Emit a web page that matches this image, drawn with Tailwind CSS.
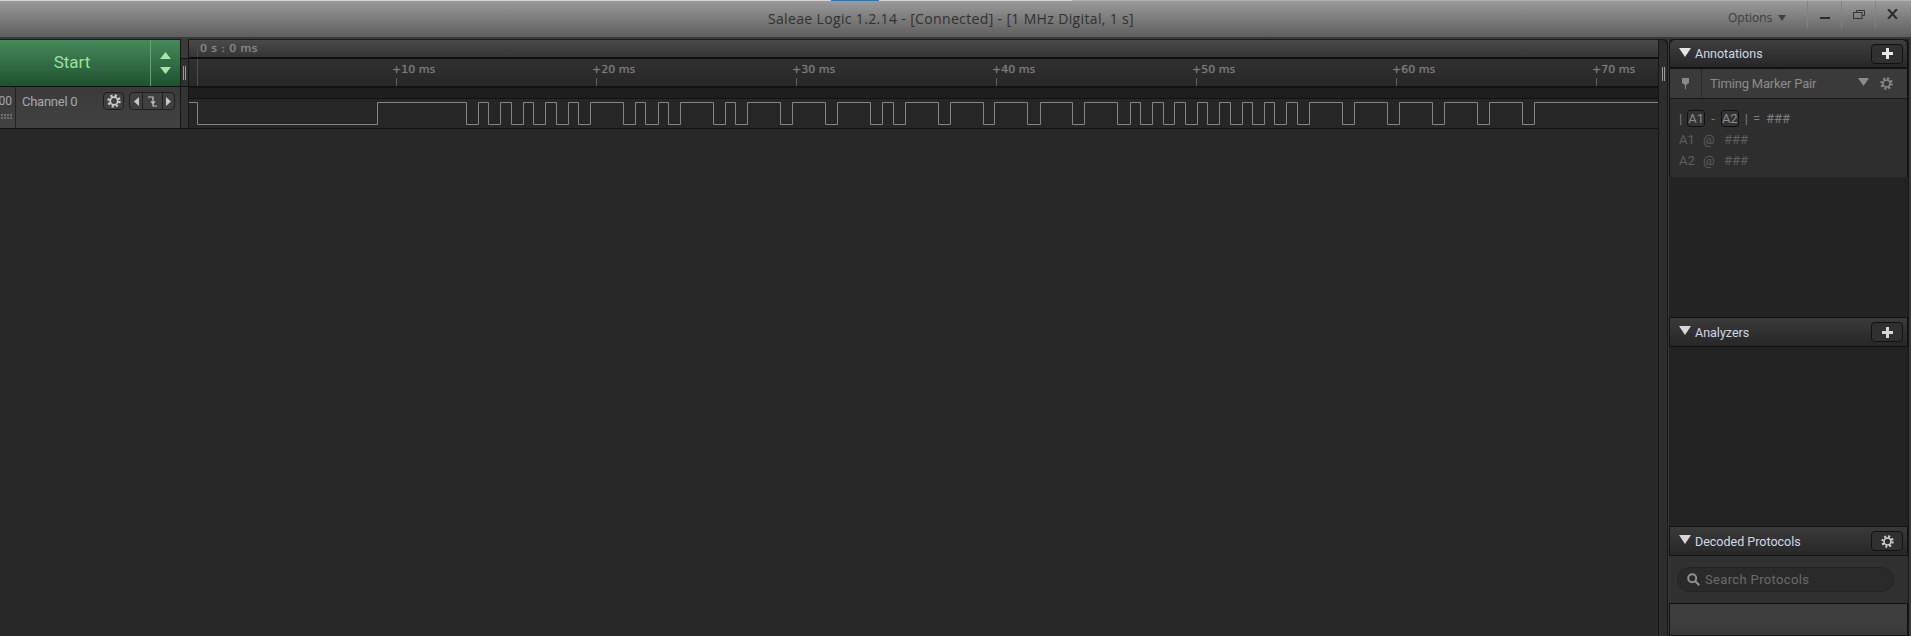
<!DOCTYPE html>
<html>
<head>
<meta charset="utf-8">
<script src="https://cdn.jsdelivr.net/npm/@tailwindcss/browser@4"></script>
</head>
<body class="m-0 bg-[#282828]">
<div class="w-[1911px] h-[636px] overflow-hidden flex flex-col font-['Roboto',sans-serif] bg-[#282828]">
  <!-- title bar -->
  <div class="h-[39px] shrink-0 flex flex-col bg-gradient-to-b from-[#9c9c9c] to-[#5e5e5e] border-b-2 border-[#3a3a3a]">
    <div class="h-px shrink-0 flex">
      <div class="w-[831px] bg-[#d4d4d4]"></div>
      <div class="w-[48px] bg-[#1379e0]"></div>
      <div class="w-[193px] bg-[#d4d4d4]"></div>
      <div class="flex-1 bg-[#b0b0b0]"></div>
    </div>
    <div class="flex-1 flex relative">
      <div class="flex-1 flex justify-center pt-[8px] pr-[9px] font-['Open_Sans',sans-serif] text-[14px] leading-[19px] tracking-[0.35px] text-[#303030] whitespace-nowrap">Saleae Logic 1.2.14 - [Connected] - [1 MHz Digital, 1 s]</div>
      <div class="absolute left-[1728px] top-[9px] flex items-center gap-[6px] font-['Open_Sans',sans-serif] text-[12px] leading-[16px] text-[#3c3c3c]">
        Options
        <svg width="8" height="6" viewBox="0 0 8 6"><path d="M0 0H8L4 6Z" fill="#404040"/></svg>
      </div>
      <div class="absolute left-[1807px] top-0 h-[27px] flex">
        <div class="w-[34px] border-l border-[#828282] flex items-center justify-center pt-[6px]"><div class="w-[10px] h-[2px] bg-[#2c2c2c]"></div></div>
        <div class="w-[34px] border-l border-[#828282] flex items-start justify-center pt-[9px]">
          <svg width="12" height="9" viewBox="0 0 12 9" fill="none" stroke="#333"><path d="M3.5 2V.5H11.5V5.5H9"/><rect x=".5" y="2.5" width="8.5" height="6"/></svg>
        </div>
        <div class="w-[34px] border-l border-[#828282] flex items-start justify-center pt-[8px]">
          <svg width="11" height="10" viewBox="0 0 11 10" fill="none" stroke="#2c2c2c" stroke-width="2"><path d="M1 0 10 10M10 0 1 10"/></svg>
        </div>
      </div>
    </div>
  </div>

  <!-- main -->
  <div class="flex-1 flex min-h-0">
    <!-- capture area -->
    <div class="w-[1658px] shrink-0 flex flex-col">
      <!-- header row -->
      <div class="h-[48px] shrink-0 flex border-b border-[#111]">
        <div class="w-[180px] shrink-0 flex border-t border-[#1c1c1c] bg-gradient-to-b from-[#468a5a] to-[#1f5230]">
          <div class="w-[150px] flex items-center justify-center pr-[6px] text-[17px] text-[#9fe09f]">Start</div>
          <div class="w-[30px] border-l border-[#65a277] flex flex-col items-center justify-center gap-[8px]">
            <svg width="11" height="7" viewBox="0 0 11 7"><path d="M5.5 0 11 7H0Z" fill="#a8e6a8"/></svg>
            <svg width="11" height="7" viewBox="0 0 11 7"><path d="M0 0H11L5.5 7Z" fill="#a8e6a8"/></svg>
          </div>
        </div>
        <div class="w-[9px] shrink-0 flex flex-col border-x border-[#161616]">
          <div class="h-[20px] bg-[#3a3a3a] border-b border-[#111]"></div>
          <div class="flex-1 bg-[#303030] flex items-center justify-center pt-[1px]">
            <div class="w-[3px] h-[14px] border-x border-[#9a9a9a]"></div>
          </div>
        </div>
        <div class="flex-1 flex flex-col">
          <div class="h-[20px] shrink-0 relative border-t border-[#1c1c1c] border-b-2 border-b-[#0f0f0f] bg-gradient-to-b from-[#4a4a4a] to-[#353535] flex items-center pl-[11px] pt-[2px] font-['DejaVu_Sans',sans-serif] text-[11px] tracking-[0.4px] [text-shadow:0_0_1px_#777] text-[#8a8a8a] whitespace-nowrap">
            0 s : 0 ms
            <div class="absolute left-[8px] bottom-0 h-[8px] w-px bg-[#505050]"></div>
          </div>
          <div class="flex-1 bg-gradient-to-b from-[#303030] to-[#272727] flex font-['DejaVu_Sans',sans-serif] text-[11px] leading-[14px] [text-shadow:0_0_1px_#666] text-[#7c7c7c] whitespace-nowrap">
            <div class="w-[9px] shrink-0 border-r border-[#505050]"></div>
            <div class="w-[198px] shrink-0"></div>
            <div class="w-[200px] shrink-0 flex flex-col justify-between">
              <div class="-ml-[4px] mt-[4px]">+10 ms</div>
              <div class="w-px h-[8px] bg-[#5e5e5e]"></div>
            </div>
            <div class="w-[200px] shrink-0 flex flex-col justify-between">
              <div class="-ml-[4px] mt-[4px]">+20 ms</div>
              <div class="w-px h-[8px] bg-[#5e5e5e]"></div>
            </div>
            <div class="w-[200px] shrink-0 flex flex-col justify-between">
              <div class="-ml-[4px] mt-[4px]">+30 ms</div>
              <div class="w-px h-[8px] bg-[#5e5e5e]"></div>
            </div>
            <div class="w-[200px] shrink-0 flex flex-col justify-between">
              <div class="-ml-[4px] mt-[4px]">+40 ms</div>
              <div class="w-px h-[8px] bg-[#5e5e5e]"></div>
            </div>
            <div class="w-[200px] shrink-0 flex flex-col justify-between">
              <div class="-ml-[4px] mt-[4px]">+50 ms</div>
              <div class="w-px h-[8px] bg-[#5e5e5e]"></div>
            </div>
            <div class="w-[200px] shrink-0 flex flex-col justify-between">
              <div class="-ml-[4px] mt-[4px]">+60 ms</div>
              <div class="w-px h-[8px] bg-[#5e5e5e]"></div>
            </div>
            <div class="w-[60px] shrink-0 flex flex-col justify-between">
              <div class="-ml-[4px] mt-[4px]">+70 ms</div>
              <div class="w-px h-[8px] bg-[#5e5e5e]"></div>
            </div>
          </div>
        </div>
      </div>
      <!-- channel row -->
      <div class="h-[42px] shrink-0 flex border-b border-[#111]">
        <div class="w-[180px] shrink-0 flex bg-gradient-to-b from-[#3a3a3a] to-[#424242]">
          <div class="w-[16px] shrink-0 border-r border-[#222] flex flex-col items-end pr-[3px] pt-[6px]">
            <div class="text-[12px] leading-[16px] text-[#a8a8a8]">00</div>
            <div class="mt-[5px] w-[11px] flex flex-col gap-[1px]">
              <div class="h-[2px] bg-[repeating-linear-gradient(90deg,#6e6e6e_0_2px,transparent_2px_3px)]"></div>
              <div class="h-[2px] bg-[repeating-linear-gradient(90deg,#6e6e6e_0_2px,transparent_2px_3px)]"></div>
            </div>
          </div>
          <div class="flex-1 flex items-start pl-[6px] pt-[7px]">
            <div class="w-[81px] text-[13px] leading-[16px] tracking-[-0.25px] text-[#a8a8a8] whitespace-nowrap">Channel 0</div>
            <div class="-mt-[2px] w-[21px] h-[18px] rounded-[4px] border border-[#1f1f1f] bg-[#404040] flex items-center justify-center">
              <svg width="14" height="14" viewBox="0 0 24 24" fill="none" stroke="#cccccc"><circle cx="12" cy="12" r="6.500" stroke-width="3"/><circle cx="12" cy="12" r="9.500" stroke-width="4" stroke-dasharray="3.730 3.730"/></svg>
            </div>
            <div class="-mt-[2px] ml-[5px] w-[46px] h-[18px] rounded-[4px] border border-[#1f1f1f] bg-[#404040] flex">
              <div class="w-[13px] border-r border-[#1f1f1f] flex items-center justify-center"><svg width="5" height="9" viewBox="0 0 5 9"><path d="M5 0V9L0 4.500Z" fill="#c8c8c8"/></svg></div>
              <div class="w-[20px] border-r border-[#1f1f1f] flex items-center justify-center"><svg width="9" height="11" viewBox="0 0 9 11" fill="none" stroke="#c8c8c8" stroke-width="1.200"><path d="M0 1H5V10H9M3 5.500 5 7.500 7 5.500"/></svg></div>
              <div class="flex-1 flex items-center justify-center"><svg width="5" height="9" viewBox="0 0 5 9"><path d="M0 0V9L5 4.500Z" fill="#c8c8c8"/></svg></div>
            </div>
          </div>
        </div>
        <div class="w-[9px] shrink-0 border-x border-[#161616] bg-[#333]"></div>
        <div class="flex-1 flex flex-col bg-[#262626]">
          <div class="h-[12px] shrink-0 bg-[#1e1e1e] border-y border-[#111]"></div>
          <svg class="flex-1 block" width="1469" height="29" viewBox="189 99 1469 29" fill="none" stroke="#858585" stroke-width="1"><path d="M189 102.500H197.500V124.500H377.500V102.500H466.500V124.500H478.500V102.500H488.500V124.500H500.500V102.500H511.500V124.500H523.500V102.500H533.500V124.500H545.500V102.500H556.500V124.500H568.500V102.500H578.500V124.500H590.500V102.500H623.500V124.500H635.500V102.500H645.500V124.500H658.500V102.500H668.500V124.500H680.500V102.500H713.500V124.500H725.500V102.500H735.500V124.500H747.500V102.500H780.500V124.500H792.500V102.500H825.500V124.500H837.500V102.500H870.500V124.500H882.500V102.500H893.500V124.500H905.500V102.500H938.500V124.500H950.500V102.500H983.500V124.500H994.500V102.500H1027.500V124.500H1040.500V102.500H1072.500V124.500H1084.500V102.500H1117.500V124.500H1130.500V102.500H1140.500V124.500H1152.500V102.500H1163.500V124.500H1174.500V102.500H1185.500V124.500H1197.500V102.500H1207.500V124.500H1219.500V102.500H1230.500V124.500H1242.500V102.500H1252.500V124.500H1264.500V102.500H1274.500V124.500H1286.500V102.500H1297.500V124.500H1309.500V102.500H1342.500V124.500H1354.500V102.500H1387.500V124.500H1399.500V102.500H1432.500V124.500H1444.500V102.500H1477.500V124.500H1489.500V102.500H1522.500V124.500H1534.500V102.500H1658"/></svg>
        </div>
      </div>
      <div class="flex-1 bg-[#282828]"></div>
    </div>
    <!-- right splitter -->
    <div class="w-[10px] shrink-0 flex flex-col border-x border-[#161616] rounded-tr-[6px] border-t bg-[#2d2d2d]">
      <div class="h-[20px]"></div>
      <div class="h-[27px] flex items-center justify-center"><div class="w-[3px] h-[14px] border-x border-[#9a9a9a]"></div></div>
    </div>
    <div class="w-px bg-[#3a3a3a]"></div>
    <!-- right panel -->
    <div class="w-[240px] shrink-0 flex flex-col bg-[#232323] border-r border-[#161616] text-[12.5px]">
      <div class="h-[30px] shrink-0 rounded-t-[6px] border border-[#111] border-b-2 bg-gradient-to-b from-[#3f3f3f] to-[#272727] flex items-center pl-[9px] pr-[4px]">
        <svg class="-mt-[3px]" width="12" height="9" viewBox="0 0 12 9"><path d="M0 0H12L6 9Z" fill="#e4e4e4"/></svg>
        <div class="ml-[4px] mt-[1px] flex-1 leading-[16px] text-[#cfdae8]">Annotations</div>
        <div class="w-[32px] h-[20px] rounded-[4px] border border-[#111] bg-[#303030] flex items-center justify-center">
          <svg width="11" height="11" viewBox="0 0 11 11"><path d="M4 0H7V4H11V7H7V11H4V7H0V4H4Z" fill="#e8e8e8"/></svg>
        </div>
      </div>
      <div class="h-[30px] shrink-0 border-x border-b border-x-[#111] border-b-[#191919] bg-[#3a3a3a] flex items-center">
        <div class="w-[31px] h-full flex items-center justify-center">
          <svg width="7" height="11" viewBox="0 0 7 11"><path d="M0 0H7V5L4 7V11H3V7L0 5Z" fill="#888"/></svg>
        </div>
        <div class="flex-1 border-l border-[#2a2a2a] h-full flex items-center pl-[8px] pt-[1px] text-[13px] tracking-[-0.2px] text-[#8c8c8c] whitespace-nowrap">Timing Marker Pair</div>
        <svg class="mr-[11px] -mt-[3px]" width="11" height="8" viewBox="0 0 11 8"><path d="M0 0H11L5.500 8Z" fill="#8c8c8c"/></svg>
        <svg class="mr-[14px]" width="13" height="13" viewBox="0 0 24 24" fill="none" stroke="#8c8c8c"><circle cx="12" cy="12" r="6.500" stroke-width="3"/><circle cx="12" cy="12" r="9.500" stroke-width="4" stroke-dasharray="3.730 3.730"/></svg>
      </div>
      <div class="h-[78px] shrink-0 border-x border-[#111] bg-[#2e2e2e] pl-[9px] pt-[11px] flex flex-col gap-[4px] text-[13px] text-[#5e5e5e]">
        <div class="h-[17px] flex items-center text-[#7e7e7e] whitespace-nowrap">
          <span>|</span>
          <span class="ml-[5px] w-[18px] h-[17px] rounded-[3px] border border-[#111] bg-[#333] flex items-center justify-center text-[#8c8c8c]">A1</span>
          <span class="ml-[6px]">-</span>
          <span class="ml-[6px] w-[18px] h-[17px] rounded-[3px] border border-[#111] bg-[#333] flex items-center justify-center text-[#8c8c8c]">A2</span>
          <span class="ml-[6px]">|</span>
          <span class="ml-[5px]">=</span>
          <span class="ml-[6px]">###</span>
        </div>
        <div class="h-[17px] flex items-center whitespace-nowrap"><span class="w-[24px]">A1</span><span class="w-[21px]">@</span><span>###</span></div>
        <div class="h-[17px] flex items-center whitespace-nowrap"><span class="w-[24px]">A2</span><span class="w-[21px]">@</span><span>###</span></div>
      </div>
      <div class="h-[140px] shrink-0"></div>
      <div class="h-[30px] shrink-0 border border-[#111] bg-gradient-to-b from-[#3a3a3a] to-[#272727] flex items-center pl-[9px] pr-[4px]">
        <svg class="-mt-[3px]" width="12" height="9" viewBox="0 0 12 9"><path d="M0 0H12L6 9Z" fill="#d8d8d8"/></svg>
        <div class="ml-[4px] mt-[1px] flex-1 leading-[16px] text-[#cfdae8]">Analyzers</div>
        <div class="w-[32px] h-[20px] rounded-[4px] border border-[#111] bg-[#303030] flex items-center justify-center">
          <svg width="11" height="11" viewBox="0 0 11 11"><path d="M4 0H7V4H11V7H7V11H4V7H0V4H4Z" fill="#d8d8d8"/></svg>
        </div>
      </div>
      <div class="h-[179px] shrink-0 bg-[#222]"></div>
      <div class="h-[30px] shrink-0 border border-[#111] bg-gradient-to-b from-[#3a3a3a] to-[#272727] flex items-center pl-[9px] pr-[4px]">
        <svg class="-mt-[3px]" width="12" height="9" viewBox="0 0 12 9"><path d="M0 0H12L6 9Z" fill="#d8d8d8"/></svg>
        <div class="ml-[4px] mt-[1px] flex-1 leading-[16px] text-[#cfdae8] whitespace-nowrap">Decoded Protocols</div>
        <div class="w-[32px] h-[20px] rounded-[4px] border border-[#111] bg-[#303030] flex items-center justify-center">
          <svg width="13" height="13" viewBox="0 0 24 24" fill="none" stroke="#d0d0d0"><circle cx="12" cy="12" r="6.500" stroke-width="3"/><circle cx="12" cy="12" r="9.500" stroke-width="4" stroke-dasharray="3.730 3.730"/></svg>
        </div>
      </div>
      <div class="h-[47px] shrink-0 bg-[#303030] pt-[11px] pl-[8px]">
        <div class="w-[217px] h-[25px] rounded-full border border-[#242424] bg-[#2a2a2a] flex items-center pl-[9px] gap-[5px] text-[13px] tracking-[0.35px] text-[#6a6a6a]">
          <svg width="13" height="13" viewBox="0 0 13 13" fill="none" stroke="#909090" stroke-width="2"><circle cx="5.200" cy="5.200" r="4"/><path d="M8.200 8.200 12.300 12.300"/></svg>
          Search Protocols
        </div>
      </div>
      <div class="flex-1 border border-[#111] bg-gradient-to-b from-[#3e3e3e] from-[60%] to-[#383838]"></div>
    </div>
    <div class="flex-1 bg-[#3a3a3a]"></div>
  </div>
</div>
</body>
</html>
